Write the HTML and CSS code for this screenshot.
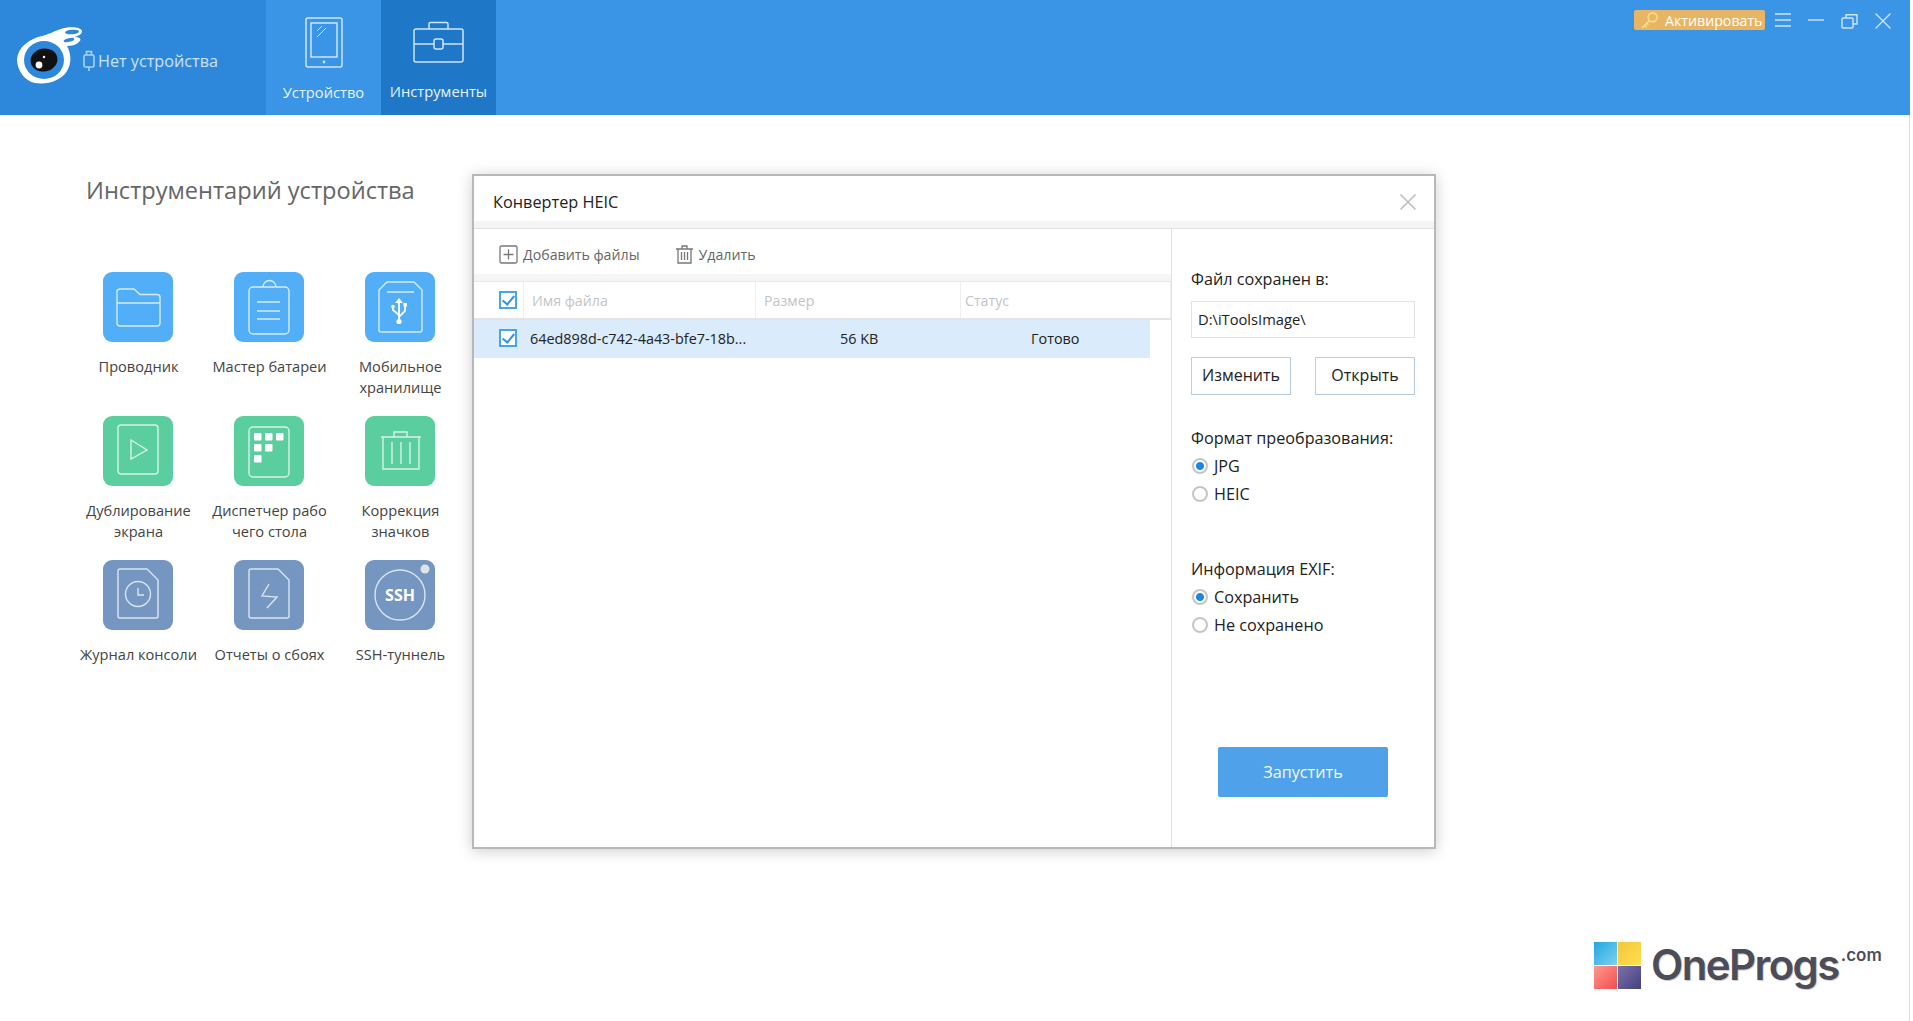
FILE: index.html
```html
<!DOCTYPE html>
<html lang="ru">

<head>
    <meta charset="UTF-8">
    <title>iTools</title>
    <link rel="stylesheet" href="styles.css">
</head>

<body>
    <div class="app">
        <!-- top bar -->
        <div class="topbar">
            <div class="brand">
                <svg class="eye" width="72" height="60" viewBox="0 0 72 60">
                    <path d="M44 2 C52 -1 66 0 65 5 C64 8 60 9 58 10 C63 10 65 12 62 15 C59 18 54 19 50 19 C54 26 55 36 50 44 C44 54 30 58 18 56 C8 54 0 44 0 32 C1 20 12 12 25 9 C30 8 38 4 44 2 Z" fill="#fff" />
                    <ellipse cx="55" cy="5" rx="7" ry="2.2" fill="#2d88dc" transform="rotate(-4 55 5)" />
                    <ellipse cx="52" cy="13" rx="5.5" ry="1.8" fill="#2d88dc" transform="rotate(-14 52 13)" />
                    <ellipse cx="27" cy="33" rx="20" ry="19" fill="#2d88dc" />
                    <ellipse cx="27" cy="33" rx="13.5" ry="11.5" fill="#111" transform="rotate(-12 27 33)" />
                    <circle cx="22" cy="38" r="3.4" fill="#fff" />
                    <circle cx="27" cy="30" r="1.2" fill="#fff" />
                </svg>
                <svg class="plug" width="14" height="22" viewBox="0 0 14 22" fill="none" stroke="#a9d2f6" stroke-width="1.6">
                    <rect x="2" y="5" width="10" height="12" rx="1.5" />
                    <path d="M4.500 5V1.500h5V5M7 17v4" />
                </svg>
                <span class="no-device">Нет устройства</span>
            </div>
            <div class="tab tab-light">
                <svg width="38" height="51" viewBox="0 0 38 51" fill="none" stroke="#cfe5f9" stroke-width="1.5">
                    <rect x="1" y="1" width="36" height="49" rx="2" />
                    <rect x="6" y="6" width="26" height="34" />
                    <path d="M12 14l5-5M12 20l9-9" stroke-width="1" />
                    <circle cx="19" cy="45" r="1.4" fill="#cfe5f9" stroke="none" />
                </svg>
                <span>Устройство</span>
            </div>
            <div class="tab tab-active">
                <svg width="52" height="42" viewBox="0 0 52 42" fill="none" stroke="#cfe5f9" stroke-width="1.5">
                    <rect x="1" y="8" width="49" height="33" rx="2" />
                    <path d="M16 8V3a1.500 1.500 0 0 1 1.500-1.500h16A1.500 1.500 0 0 1 35 3v5M1 23h20M30 23h20" />
                    <rect x="21" y="18" width="9" height="10" rx="2" />
                </svg>
                <span>Инструменты</span>
            </div>
            <div class="win-controls">
                <div class="activate">
                    <svg width="19" height="19" viewBox="0 0 18 18" fill="none" stroke="#f7dc82" stroke-width="1.6">
                        <circle cx="12" cy="6" r="4.200" />
                        <path d="M9 9l-7 7M4.500 13.500l2 2M6.500 11.500l1.500 1.500" />
                    </svg>
                    <span>Активировать</span>
                </div>
                <svg class="win-icon" width="16" height="14" viewBox="0 0 16 14" fill="none" stroke="#cfe5f9" stroke-width="1.4">
                    <path d="M0 1h16M0 7h16M0 13h16" />
                </svg>
                <svg class="win-icon" width="16" height="14" viewBox="0 0 16 14" fill="none" stroke="#cfe5f9" stroke-width="1.4">
                    <path d="M0 7h16" />
                </svg>
                <svg class="win-icon" width="17" height="16" viewBox="0 0 17 16" fill="none" stroke="#cfe5f9" stroke-width="1.4">
                    <rect x="1" y="5" width="11" height="10" rx="1" />
                    <path d="M5 5V1.700h11V11h-4" />
                </svg>
                <svg class="win-icon" width="16" height="16" viewBox="0 0 16 16" fill="none" stroke="#cfe5f9" stroke-width="1.3">
                    <path d="M0.500 0.500l15 15M15.500 0.500l-15 15" />
                </svg>
            </div>
        </div>

        <!-- device tools -->
        <div class="main">
            <h1 class="page-title">Инструментарий устройства</h1>
            <div class="tools">
                <div class="tool">
                    <div class="tile tile-blue">
                        <svg width="70" height="70" viewBox="0 0 70 70" fill="none" stroke="#d5ebfd" stroke-width="1.4">
                            <path d="M14 20a3 3 0 0 1 3-3h14l6 5.500h17a3 3 0 0 1 3 3V51a3 3 0 0 1-3 3H17a3 3 0 0 1-3-3zM14 31h43" />
                        </svg>
                    </div>
                    <div class="tool-name">Проводник</div>
                </div>
                <div class="tool">
                    <div class="tile tile-blue">
                        <svg width="70" height="70" viewBox="0 0 70 70" fill="none" stroke="#d5ebfd" stroke-width="1.4">
                            <rect x="15" y="15" width="40" height="47" rx="4" />
                            <path d="M29 15a6.500 6.500 0 0 1 13 0M23 30h23M23 39h23M23 47h23" />
                        </svg>
                    </div>
                    <div class="tool-name">Мастер батареи</div>
                </div>
                <div class="tool">
                    <div class="tile tile-blue">
                        <svg width="70" height="70" viewBox="0 0 70 70" fill="none" stroke="#d5ebfd" stroke-width="1.4">
                            <path d="M22 10h27l8 8v40a2 2 0 0 1-2 2H16a2 2 0 0 1-2-2V18zM22 20h27" />
                            <path d="M34 29v20M34 43l-6-5v-3M34 45l6-6v-5" stroke="#fff" stroke-width="1.800" />
                            <path d="M34 26l-4 5h8z" fill="#fff" stroke="none" />
                            <circle cx="34" cy="49.500" r="2.600" fill="#fff" stroke="none" />
                            <circle cx="28" cy="34.500" r="1.800" fill="#fff" stroke="none" />
                            <rect x="38.500" y="31" width="3.400" height="3.400" fill="#fff" stroke="none" />
                        </svg>
                    </div>
                    <div class="tool-name">Мобильное<br>хранилище</div>
                </div>
                <div class="tool">
                    <div class="tile tile-green">
                        <svg width="70" height="70" viewBox="0 0 70 70" fill="none" stroke="#d5f3e7" stroke-width="1.4">
                            <rect x="15" y="9" width="40" height="49" rx="3" />
                            <path d="M28 24l16 10-16 9z" />
                        </svg>
                    </div>
                    <div class="tool-name">Дублирование<br>экрана</div>
                </div>
                <div class="tool">
                    <div class="tile tile-green">
                        <svg width="70" height="70" viewBox="0 0 70 70" fill="none" stroke="#d5f3e7" stroke-width="1.4">
                            <rect x="15" y="11" width="40" height="50" rx="4" />
                            <g fill="#fff" stroke="none">
                                <rect x="20" y="17" width="7.500" height="7.500" rx="1" />
                                <rect x="31" y="17" width="7.500" height="7.500" rx="1" />
                                <rect x="42" y="17" width="7.500" height="7.500" rx="1" />
                                <rect x="20" y="28" width="7.500" height="7.500" rx="1" />
                                <rect x="31" y="28" width="7.500" height="7.500" rx="1" />
                                <rect x="20" y="39" width="7.500" height="7.500" rx="1" />
                            </g>
                        </svg>
                    </div>
                    <div class="tool-name">Диспетчер рабо<br>чего стола</div>
                </div>
                <div class="tool">
                    <div class="tile tile-green">
                        <svg width="70" height="70" viewBox="0 0 70 70" fill="none" stroke="#d5f3e7" stroke-width="1.4">
                            <path d="M16 21h40M18 21v32h36V21M29 21v-5h13v5M27 26v22M36 26v22M45 26v22" />
                        </svg>
                    </div>
                    <div class="tool-name">Коррекция<br>значков</div>
                </div>
                <div class="tool">
                    <div class="tile tile-slate">
                        <svg width="70" height="70" viewBox="0 0 70 70" fill="none" stroke="#dbe4f0" stroke-width="1.4">
                            <path d="M17 9h27l11 11v36a2 2 0 0 1-2 2H17a2 2 0 0 1-2-2V11a2 2 0 0 1 2-2z" />
                            <circle cx="35" cy="34" r="12.500" />
                            <path d="M35 28v7h6" />
                        </svg>
                    </div>
                    <div class="tool-name">Журнал консоли</div>
                </div>
                <div class="tool">
                    <div class="tile tile-slate">
                        <svg width="70" height="70" viewBox="0 0 70 70" fill="none" stroke="#dbe4f0" stroke-width="1.4">
                            <path d="M17 9h27l11 11v36a2 2 0 0 1-2 2H17a2 2 0 0 1-2-2V11a2 2 0 0 1 2-2z" />
                            <path d="M35 24l-7 12 15 1-10 11" />
                        </svg>
                    </div>
                    <div class="tool-name">Отчеты о сбоях</div>
                </div>
                <div class="tool">
                    <div class="tile tile-slate">
                        <svg width="70" height="70" viewBox="0 0 70 70" fill="none" stroke="#dbe4f0" stroke-width="1.4">
                            <circle cx="35" cy="35" r="25" />
                            <circle cx="60" cy="9" r="4.500" fill="#dfe3e8" stroke="none" />
                            <text class="ssh-text" x="35" y="41" text-anchor="middle">SSH</text>
                        </svg>
                    </div>
                    <div class="tool-name">SSH-туннель</div>
                </div>
            </div>

            <!-- HEIC dialog -->
            <div class="dialog">
                <div class="dialog-head">
                    <span>Конвертер HEIC</span>
                    <svg width="16" height="16" viewBox="0 0 16 16" fill="none" stroke="#bcbcbc" stroke-width="1.500">
                        <path d="M0.500 0.500l15 15M15.500 0.500l-15 15" />
                    </svg>
                </div>
                <div class="dialog-body">
                    <div class="files">
                        <div class="toolbar">
                            <div class="tool-btn">
                                <svg width="19" height="19" viewBox="0 0 19 19" fill="none" stroke="#777" stroke-width="1.300">
                                    <rect x="1" y="1" width="17" height="17" rx="1.500" />
                                    <path d="M9.500 4.500v10M4.500 9.500h10" />
                                </svg>
                                <span>Добавить файлы</span>
                            </div>
                            <div class="tool-btn">
                                <svg width="19" height="19" viewBox="0 0 19 19" fill="none" stroke="#777" stroke-width="1.300">
                                    <path d="M1 4h17M3 4v14h13V4M7 4V1h5v3M6.500 7v8M9.500 7v8M12.500 7v8" />
                                </svg>
                                <span>Удалить</span>
                            </div>
                        </div>
                        <div class="table-head">
                            <div class="col-check">
                                <span class="check"></span>
                            </div>
                            <div class="col-name">Имя файла</div>
                            <div class="col-size">Размер</div>
                            <div class="col-status">Статус</div>
                        </div>
                        <div class="table-row">
                            <div class="col-check">
                                <span class="check"></span>
                            </div>
                            <div class="cell-name">64ed898d-c742-4a43-bfe7-18b...</div>
                            <div class="cell-size">56 KB</div>
                            <div class="cell-status">Готово</div>
                        </div>
                    </div>
                    <div class="options">
                        <div class="opt-label">Файл сохранен в:</div>
                        <div class="path-input">D:\iToolsImage\</div>
                        <div class="btn-row">
                            <div class="btn">Изменить</div>
                            <div class="btn">Открыть</div>
                        </div>
                        <div class="opt-label format-label">Формат преобразования:</div>
                        <div class="radio-line"><span class="radio on"></span>JPG</div>
                        <div class="radio-line"><span class="radio"></span>HEIC</div>
                        <div class="opt-label exif-label">Информация EXIF:</div>
                        <div class="radio-line"><span class="radio on"></span>Сохранить</div>
                        <div class="radio-line"><span class="radio"></span>Не сохранено</div>
                        <div class="start-btn">Запустить</div>
                    </div>
                </div>
            </div>

            <!-- watermark -->
            <div class="watermark">
                <div class="squares">
                    <span class="sq sq-blue"></span>
                    <span class="sq sq-yellow"></span>
                    <span class="sq sq-red"></span>
                    <span class="sq sq-purple"></span>
                </div>
                <span class="wm-name">OneProgs</span>
                <span class="wm-com">.com</span>
            </div>
        </div>
    </div>
</body>

</html>
```

FILE: styles.css
```css
*,
*:after {
    box-sizing: border-box;
}

html,
body {
    margin: 0;
    height: 100%;
    background: #fff;
}

body {
    font-family: "Open Sans", "Noto Sans", sans-serif;
    font-size: 14px;
    color: #333;
    overflow: hidden;
}

.app {
    width: 1910px;
    height: 1021px;
    display: flex;
    flex-direction: column;
}

/* top bar */

.topbar {
    height: 115px;
    display: flex;
    background: #3a95e6;
    flex-shrink: 0;
}

.brand {
    width: 266px;
    background: #2d88dc;
    padding: 27px 0 0 17px;
    display: flex;
    align-items: flex-start;
}

.plug {
    margin: 23px 0 0 -7px;
}

.no-device {
    margin: 23px 0 0 2px;
    font-size: 16.200px;
    color: #cbe2f7;
    white-space: nowrap;
}

.tab {
    width: 115px;
    display: flex;
    flex-direction: column;
    align-items: center;
    color: #e8f3fc;
    font-size: 14.700px;
}

.tab svg {
    margin-top: 17px;
}

.tab span {
    margin-top: 14px;
}

.tab-light {
    background: #3a95e6;
}

.tab-active {
    background: #1f77c8;
}

.tab-active svg {
    margin-top: 21px;
    margin-bottom: 4px;
}

.win-controls {
    flex: 1;
    display: flex;
    justify-content: flex-end;
    align-items: flex-start;
    padding: 10px 19px 0 0;
    gap: 17px;
}

.activate {
    width: 131px;
    height: 20px;
    margin-right: -7px;
    background: #e8b565;
    border-radius: 2px;
    display: flex;
    align-items: center;
    padding-left: 6px;
    gap: 6px;
    color: #fff;
    font-size: 14.200px;
    white-space: nowrap;
}

.win-icon {
    margin-top: 3px;
}

/* tools */

.main {
    flex: 1;
    position: relative;
    border-right: 1px solid #ddd;
    padding: 56px 0 0 72px;
}

.page-title {
    margin: 0 0 0 14px;
    height: 38px;
    font-size: 23.600px;
    line-height: 38px;
    font-weight: 400;
    color: #666;
}

.tools {
    margin-top: 63px;
    display: grid;
    grid-template-columns: repeat(3, 131px);
    grid-auto-rows: 144px;
}

.tool {
    display: flex;
    flex-direction: column;
    align-items: center;
}

.tile {
    width: 70px;
    height: 70px;
    border-radius: 9px;
}

.tile svg {
    display: block;
}

.tile-blue {
    background: #53aef8;
}

.tile-green {
    background: #5bcea0;
}

.tile-slate {
    background: #7596c1;
}

.ssh-text {
    font-family: "Open Sans", sans-serif;
    font-size: 16px;
    font-weight: 700;
    fill: #fff;
    stroke: none;
}

.tool-name {
    margin-top: 14px;
    padding-left: 2px;
    font-size: 14.600px;
    line-height: 21px;
    text-align: center;
    color: #444;
    white-space: nowrap;
}

/* dialog */

.dialog {
    position: absolute;
    left: 472px;
    top: 59px;
    width: 964px;
    height: 675px;
    background: #fff;
    border: 2px solid #b8b8b8;
    box-shadow: 0 2px 14px rgba(0, 0, 0, 0.2);
    display: flex;
    flex-direction: column;
}

.dialog-head {
    height: 45px;
    flex-shrink: 0;
    display: flex;
    justify-content: space-between;
    align-items: center;
    padding: 6px 18px 0 19px;
    font-size: 16.300px;
    color: #222;
}

.dialog-body {
    flex: 1;
    display: flex;
    border-top: 7px solid #f5f5f5;
}

.files {
    width: 698px;
    border-top: 1px solid #e2e2e2;
    border-right: 1px solid #e2e2e2;
}

.toolbar {
    height: 52px;
    display: flex;
    align-items: center;
    gap: 35px;
    padding: 5px 0 0 25px;
    border-bottom: 7px solid #f5f5f5;
}

.tool-btn {
    display: flex;
    align-items: center;
    gap: 5px;
    font-size: 14.200px;
    color: #666;
}

.table-head {
    height: 39px;
    display: flex;
    align-items: center;
    border-top: 1px solid #e8e8e8;
    border-bottom: 2px solid #e4e4e4;
    color: #c4c4c4;
    font-size: 14.200px;
}

.table-head > div {
    height: 100%;
    display: flex;
    align-items: center;
    padding-left: 8px;
    border-right: 1px solid #eee;
}

.table-head .col-check {
    padding-left: 25px;
    width: 50px;
}

.col-name {
    width: 232px;
}

.col-size {
    width: 205px;
}

.col-status {
    flex: 1;
    padding-left: 4px !important;
}

.check {
    display: block;
    width: 18px;
    height: 18px;
    border: 2px solid #4aa3ec;
    background: #fff;
    position: relative;
}

.check:after {
    content: '';
    position: absolute;
    left: 4px;
    top: 0;
    width: 7px;
    height: 12px;
    border-right: 2px solid #2f94e8;
    border-bottom: 2px solid #2f94e8;
    transform: rotate(40deg);
}

.table-row {
    width: 676px;
    height: 38px;
    display: flex;
    align-items: center;
    padding-bottom: 2px;
    background: #daebfb;
    color: #222;
    font-size: 14.400px;
}

.table-row .col-check {
    padding-left: 25px;
    width: 56px;
}

.cell-name {
    width: 310px;
}

.cell-size {
    width: 191px;
}

/* right panel */

.options {
    flex: 1;
    position: relative;
    padding: 38px 19px 0 19px;
    font-size: 16.200px;
    color: #222;
    border-top: 1px solid #e2e2e2;
}

.opt-label {
    height: 24px;
    line-height: 24px;
    white-space: nowrap;
}

.path-input {
    margin-top: 10px;
    height: 37px;
    line-height: 35px;
    border: 1px solid #e3e3e3;
    padding-left: 6px;
    font-size: 14.700px;
}

.btn-row {
    margin-top: 19px;
    display: flex;
    justify-content: space-between;
}

.btn {
    width: 100px;
    height: 38px;
    line-height: 35px;
    text-align: center;
    border: 1px solid #ccc;
    border-right-color: #b5c8d8;
    border-bottom-color: #b5c8d8;
    border-radius: 1px;
    font-size: 16px;
}

.format-label {
    margin-top: 31px;
}

.exif-label {
    margin-top: 49px;
}

.radio-line {
    height: 28px;
    display: flex;
    align-items: center;
    gap: 6px;
    margin-top: 2px;
}

.radio-line + .radio-line {
    margin-top: 0;
}

.radio {
    width: 16px;
    height: 16px;
    margin-left: 1px;
    border: 2px solid #c6c6c6;
    border-radius: 50%;
    background: #fff;
}

.radio.on {
    background: radial-gradient(circle, #1a88e8 0, #1a88e8 3.500px, #fff 4.500px);
}

.start-btn {
    position: absolute;
    left: 46px;
    top: 518px;
    width: 170px;
    height: 50px;
    line-height: 50px;
    text-align: center;
    background: #4fa2ea;
    border-radius: 2px;
    color: #f2f8fe;
    font-size: 16.200px;
}

/* watermark */

.watermark {
    position: absolute;
    left: 1594px;
    top: 827px;
    display: flex;
    align-items: flex-start;
}

.squares {
    width: 48px;
    height: 48px;
    display: grid;
    grid-template-columns: 23px 23px;
    grid-template-rows: 23px 23px;
    gap: 1px;
}

.sq-blue {
    background: linear-gradient(135deg, #20a8e2, #7fd0ee);
}

.sq-yellow {
    background: linear-gradient(135deg, #f2c83a, #ffdf50);
}

.sq-red {
    background: linear-gradient(135deg, #ff9a90, #f24c50);
}

.sq-purple {
    background: linear-gradient(135deg, #7a72a8, #463f80);
}

.wm-name {
    margin: -2px 0 0 9px;
    font-family: Inter, sans-serif;
    font-size: 42px;
    line-height: 50px;
    font-weight: 600;
    letter-spacing: -1.600px;
    color: #4d4d5a;
    text-shadow: 1px 1px 1px #ccc;
}

.wm-com {
    margin: 1px 0 0 2px;
    font-family: Inter, sans-serif;
    font-size: 17px;
    line-height: 24px;
    font-weight: 600;
    color: #4d4d5a;
}
```
